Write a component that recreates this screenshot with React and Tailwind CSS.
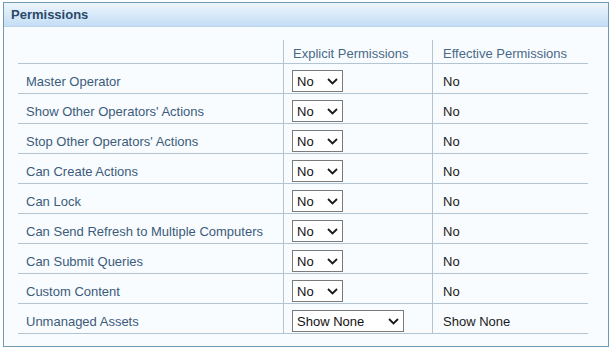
import React from "react";

const rows = [
  "Master Operator",
  "Show Other Operators' Actions",
  "Stop Other Operators' Actions",
  "Can Create Actions",
  "Can Lock",
  "Can Send Refresh to Multiple Computers",
  "Can Submit Queries",
  "Custom Content",
  "Unmanaged Assets",
];

function Chevron() {
  return (
    <svg width="11" height="7" viewBox="0 0 11 7" className="shrink-0">
      <path d="M1 1 L5.5 5.5 L10 1" fill="none" stroke="#1a1a1a" strokeWidth="1.8" />
    </svg>
  );
}

function FakeSelect({ value, wide }) {
  return (
    <div
      className={
        "h-[22px] border border-[#7a7a7a] bg-white flex items-center justify-between pl-[4px] pr-[4px] " +
        (wide ? "w-[112px]" : "w-[51px]")
      }
    >
      <span className="text-[13px] leading-[15px] text-[#111]">{value}</span>
      <Chevron />
    </div>
  );
}

export default function App() {
  return (
    <div
      className="w-[612px] h-[351px] bg-white pt-[2px] pl-[3px]"
      style={{ fontFamily: '"Liberation Sans", Arial, sans-serif' }}
    >
      <div className="w-[606px] h-[345px] border border-[#7099b3] bg-[#f8fcfe]">
        <div className="h-[24px] bg-gradient-to-b from-[#edf5fc] to-[#c4def5] border-b border-[#bcd4ea] pl-[7px] flex items-center">
          <span className="text-[13px] font-bold text-[#2a486a] leading-[15px]">Permissions</span>
        </div>
        <div className="pl-[14px] pt-[13px]">
          <div className="grid grid-cols-[265px_149px_156px]">
            <div className="h-[24px] border-b border-[#b3c4d2]" />
            <div className="h-[24px] border-b border-l border-[#b3c4d2] flex items-end pb-[2px] pl-[9px]">
              <span className="text-[13px] leading-[15px] text-[#4a6888]">Explicit Permissions</span>
            </div>
            <div className="h-[24px] border-b border-l border-[#b3c4d2] flex items-end pb-[2px] pl-[10px]">
              <span className="text-[13px] leading-[15px] text-[#4a6888]">Effective Permissions</span>
            </div>
            {rows.map((label, i) => {
              const last = i === rows.length - 1;
              const val = last ? "Show None" : "No";
              return (
                <React.Fragment key={label}>
                  <div className="h-[30px] border-b border-[#b3c4d2] pt-[6px] pl-[8px]">
                    <div className="h-[22px] flex items-center text-[13px] leading-[15px] text-[#3c5b7b]">
                      {label}
                    </div>
                  </div>
                  <div className="h-[30px] border-b border-l border-[#b3c4d2] pt-[6px] pl-[8px]">
                    <FakeSelect value={val} wide={last} />
                  </div>
                  <div className="h-[30px] border-b border-l border-[#b3c4d2] pt-[6px] pl-[10px]">
                    <div className="h-[22px] flex items-center text-[13px] leading-[15px] text-[#1a1a1a]">
                      {val}
                    </div>
                  </div>
                </React.Fragment>
              );
            })}
          </div>
        </div>
      </div>
    </div>
  );
}
